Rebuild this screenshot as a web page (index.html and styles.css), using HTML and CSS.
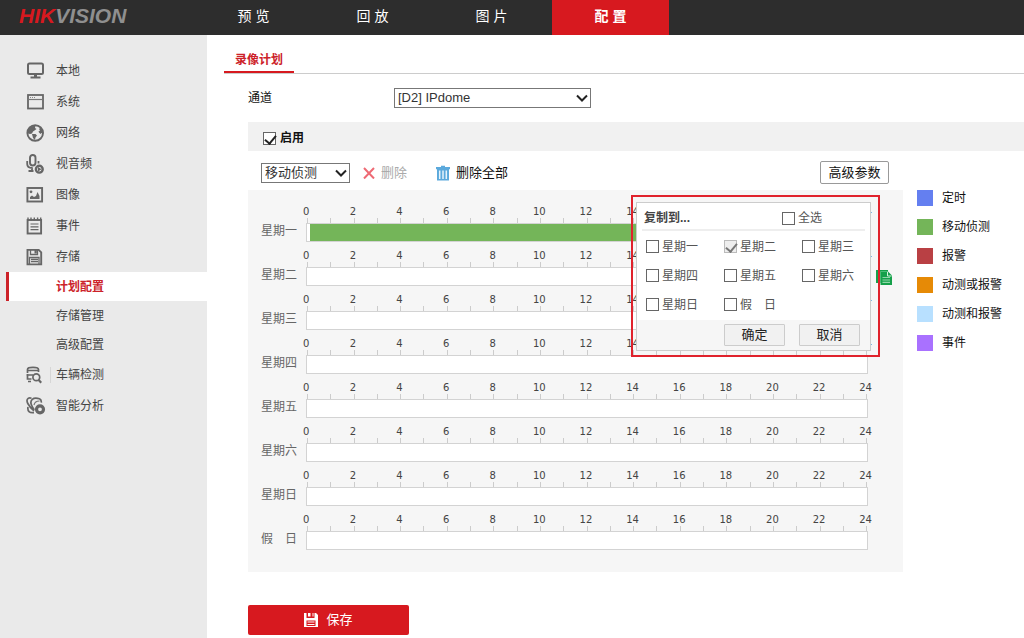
FILE: index.html
```html
<!DOCTYPE html>
<html lang="zh-CN">
<head>
<meta charset="utf-8">
<title>录像计划</title>
<link rel="stylesheet" href="styles.css">
</head>
<body>
<header class="topbar">
  <div class="logo"><span class="logo-red">HIK</span>VISION</div>
  <nav class="topnav">
    <a href="#">预 览</a>
    <a href="#">回 放</a>
    <a href="#">图 片</a>
    <a href="#" class="active">配 置</a>
  </nav>
</header>
<div class="layout">
  <nav class="sidebar">
    <a href="#" class="item"><svg class="icon" viewBox="0 0 18 18"><rect x="2" y="1.500" width="15" height="10.500" rx="1.500" fill="none" stroke="#666" stroke-width="2"/><path d="M8 12h3v2.500h3.500V16.500h-10v-2H8z" fill="#666"/></svg>本地</a>
    <a href="#" class="item"><svg class="icon" viewBox="0 0 18 18"><rect x="2" y="2" width="15" height="13.500" fill="none" stroke="#666" stroke-width="1.800"/><path d="M2 6.500h15" stroke="#777" stroke-width="1.200"/><path d="M4 4.500h5" stroke="#888" stroke-dasharray="1 1"/></svg>系统</a>
    <a href="#" class="item"><svg class="icon" viewBox="0 0 18 18"><circle cx="9.200" cy="9" r="7.800" fill="none" stroke="#666" stroke-width="1.900"/><path d="M2 9.500V6L5 2.500l4.500-1L9 4l1.500 1L8.500 6.500 7 7.500 6 9.500 4 10zM6 10h3.500L11 11.500 9.500 13.500 9 16 7 14zM13 8.500l-.5-1L14 6.500 13 5l1.500-1.500L17 7l.5 2.500-2-.5-1 1z" fill="#666"/></svg>网络</a>
    <a href="#" class="item"><svg class="icon tall" viewBox="0 0 18 20"><rect x="4" y="1" width="5.500" height="10.500" rx="2.700" fill="none" stroke="#666" stroke-width="1.900"/><path d="M1.200 7v3c0 2.500 2 4 5.300 4M6 13.500v3M2.500 17h5M12.500 7v2.500" fill="none" stroke="#666" stroke-width="1.800"/><circle cx="13.300" cy="15.200" r="3.400" fill="none" stroke="#666" stroke-width="2.400"/><path d="M12 13l3.500 2.200-3.500 2.200z" fill="#666"/></svg>视音频</a>
    <a href="#" class="item"><svg class="icon" viewBox="0 0 18 18"><rect x="1.400" y="2" width="14.700" height="13.500" fill="none" stroke="#666" stroke-width="1.900"/><path d="M4 13v-2l2-1.500L8 11l2-1 1.500-4L13.500 10v3z" fill="#666"/><circle cx="5" cy="5.800" r="1.400" fill="#666"/></svg>图像</a>
    <a href="#" class="item"><svg class="icon" viewBox="0 0 18 18"><rect x="1.600" y="3" width="13.500" height="13.500" fill="none" stroke="#666" stroke-width="1.900"/><path d="M2 .5v3M5 .5v3M8.300.5v3M11.600.5v3M14.700.5v3" stroke="#666" stroke-width="1.400"/><path d="M4.500 7h8M4.500 9.800h8M4.500 12.600h8" stroke="#666" stroke-width="1.200"/></svg>事件</a>
    <a href="#" class="item"><svg class="icon" viewBox="0 0 18 18"><path d="M1.500 1.900h11.200l2.500 2.500v12H1.500z" fill="none" stroke="#666" stroke-width="1.900"/><path d="M4.500 2v4.500h7V2M3.500 16V9.500h9.500V16M5 11.500h7M5 13.700h7" fill="none" stroke="#666" stroke-width="1.300"/><path d="M8.500 2h2.300v3.500H8.500z" fill="#666"/></svg>存储</a>
    <a href="#" class="sub active">计划配置</a>
    <a href="#" class="sub">存储管理</a>
    <a href="#" class="sub">高级配置</a>
    <a href="#" class="item ruled"><svg class="icon" viewBox="0 0 18 18"><path d="M1.500 7V3.500C1.500 2 3 1.300 7 1.300S12.500 2 12.500 3.500V6M1.500 4.500h11M.5 9h6.500M1.500 8v5h4M2 15.500h3" fill="none" stroke="#666" stroke-width="1.700"/><circle cx="10.300" cy="11.300" r="3.400" fill="none" stroke="#666" stroke-width="1.700"/><path d="M12.500 13.800l2.700 2.900" stroke="#666" stroke-width="2.200"/></svg>车辆检测</a>
    <a href="#" class="item"><svg class="icon wide" viewBox="0 0 20 18"><path d="M13.500 1.800C7-.5 3.500 3.500 5.500 8c.8 2 1.600 3.500 2.800 4.800M5.500 1.200C1.500 0 0 3 1.800 6.500c1.500 3 3.500 5 6.200 7.300M13.500 1.800c1.500.8 2 2 1.800 3.800M2 10c-.8 4 1.500 6.200 6 5.600" fill="none" stroke="#666" stroke-width="1.700"/><path d="M8 8a5.500 5 0 0 1 5.500-4" fill="none" stroke="#777" stroke-width="1.200"/><circle cx="14" cy="12.300" r="3.500" fill="none" stroke="#666" stroke-width="3.200"/></svg>智能分析</a>
  </nav>
  <main class="main">
    <div class="tabs"><a href="#" class="tab">录像计划</a></div>
    <div class="content">
      <div class="channel">
        <label for="channel">通道</label>
        <span class="select channel-select">
          <select id="channel"><option>[D2] IPdome</option></select>
          <svg class="chevron" viewBox="0 0 12 8"><path d="M1 1.500l5 5 5-5" fill="none" stroke="#222" stroke-width="2"/></svg>
        </span>
      </div>
      <div class="enable"><label class="check"><input type="checkbox" checked>启用</label></div>
      <div class="toolbar">
        <span class="select type-select">
          <select aria-label="录像类型"><option>移动侦测</option></select>
          <svg class="chevron" viewBox="0 0 12 8"><path d="M1 1.500l5 5 5-5" fill="none" stroke="#222" stroke-width="2"/></svg>
        </span>
        <button class="tool delete" disabled><svg class="cross" viewBox="0 0 12 12"><path d="M1 1l10 10.500M11 1L1 11.500" stroke="#ee6a74" stroke-width="2"/></svg>删除</button>
        <button class="tool"><svg class="trash" viewBox="0 0 14 16"><path d="M0 2h5V.8h4V2h5v2.200H0z" fill="#5ba9dc"/><path d="M1 4h12v11.500H1z" fill="#5ba9dc"/><path d="M3.700 5.500V14M7 5.500V14M10.300 5.500V14" stroke="#e6f3fc" stroke-width="1.500"/></svg>删除全部</button>
        <button class="advanced">高级参数</button>
      </div>
      <div class="schedule">
        <section class="panel">
          <div id="days" class="days"></div>
          <div class="highlight">
            <form class="popup">
              <div class="popup-head"><strong>复制到...</strong><label class="check"><input type="checkbox">全选</label></div>
              <div class="popup-days">
                <label class="check"><input type="checkbox">星期一</label>
                <label class="check"><input type="checkbox" checked disabled>星期二</label>
                <label class="check"><input type="checkbox">星期三</label>
                <label class="check"><input type="checkbox">星期四</label>
                <label class="check"><input type="checkbox">星期五</label>
                <label class="check"><input type="checkbox">星期六</label>
                <label class="check"><input type="checkbox">星期日</label>
                <label class="check"><input type="checkbox">假　日</label>
              </div>
              <div class="popup-foot"><button type="button">确定</button><button type="button">取消</button></div>
            </form>
          </div>
        </section>
        <ul class="legend">
          <li><i class="swatch timed"></i>定时</li>
          <li><i class="swatch motion"></i>移动侦测</li>
          <li><i class="swatch alarm"></i>报警</li>
          <li><i class="swatch either"></i>动测或报警</li>
          <li><i class="swatch both"></i>动测和报警</li>
          <li><i class="swatch event"></i>事件</li>
        </ul>
      </div>
      <button class="save"><svg class="disk" viewBox="0 0 14 14"><path d="M0 0h2.500v5h8V0H12l2 2v12H0zM4 0h2.500v3.500H4zM8.500 0H9.500v3.500H8.500z" fill="#fff"/><path d="M2.500 7.500h9V13h-9z" fill="#d7191f"/><path d="M3.500 9h7M3.500 11.500h7" stroke="#fff"/></svg>保存</button>
    </div>
  </main>
</div>
<script src="schedule.js"></script>
</body>
</html>
```
FILE: styles.css
```css
* { box-sizing: border-box; }
body {
  margin: 0;
  min-height: 100vh;
  display: flex;
  flex-direction: column;
  background: #fff;
  color: #111;
  font: 12px/16px "Liberation Sans", "Noto Sans CJK SC", sans-serif;
}
a { color: inherit; text-decoration: none; }
button, select, input { font: inherit; color: inherit; margin: 0; }
button { cursor: pointer; }

.topbar { display: flex; height: 35px; background: #2d2d2d; }
.logo {
  width: 195px;
  padding-left: 19px;
  color: #8f8f8f;
  font-size: 21px;
  font-weight: bold;
  font-style: italic;
  line-height: 31px;
}
.logo-red { color: #d7191f; }
.topnav { display: flex; gap: 2px; }
.topnav a {
  width: 117px;
  color: #fff;
  font-size: 14px;
  line-height: 33px;
  text-align: center;
}
.topnav .active { background: #d7191f; font-weight: bold; }

.layout { flex: 1; display: flex; }
.sidebar { width: 207px; padding-top: 20px; background: #eaeaea; color: #444; }
.item { display: flex; align-items: center; gap: 12px; height: 31px; padding: 1px 0 0 26px; }
.icon { width: 18px; height: 18px; }
.icon.tall { height: 20px; }
.icon.wide { width: 20px; margin-right: -2px; }
.ruled { position: relative; }
.ruled::after { content: ""; position: absolute; left: 50px; top: 8px; width: 1px; height: 16px; background: #d6d6d6; }
.sub { display: block; padding: 2px 0 0 56px; line-height: 27px; }
.sub.active {
  margin-left: 6px;
  padding-left: 47px;
  border-left: 3px solid #cc2229;
  background: #fff;
  color: #cc2229;
  font-weight: bold;
}

.main { flex: 1; min-width: 0; }
.tabs { display: flex; height: 39px; margin-left: 17px; border-bottom: 1px solid #ccc; }
.tab {
  width: 70px;
  border-bottom: 2px solid #d7191f;
  color: #cc2229;
  font-weight: bold;
  line-height: 50px;
  text-align: center;
}
.content { margin-left: 41px; }
.channel { display: flex; align-items: center; height: 48px; }
.channel label { width: 146px; }
.select { position: relative; display: block; height: 20px; }
.channel-select { width: 197px; }
.type-select { width: 89px; }
.select select {
  appearance: none;
  width: 100%;
  height: 100%;
  padding: 0 3px;
  border: 1px solid #777;
  border-radius: 0;
  background: #fff;
  color: #333;
  font-size: 13px;
  line-height: 18px;
}
.chevron { position: absolute; right: 3px; top: 6px; width: 12px; height: 8px; pointer-events: none; }

.check { display: flex; align-items: center; gap: 3px; }
.check input {
  appearance: none;
  position: relative;
  flex: none;
  width: 13px;
  height: 13px;
  border: 1px solid #666;
  background: #fff;
}
.check input:checked::after {
  content: "";
  position: absolute;
  left: 3px;
  top: 0;
  width: 5px;
  height: 9px;
  border: solid #222;
  border-width: 0 2px 2px 0;
  transform: rotate(40deg);
}
.check input:disabled { border-color: #bbb; background: #eee; }
.check input:disabled::after { border-color: #777; }

.enable { padding: 8px 15px 5px; height: 29px; background: #f1f1f1; font-weight: bold; }
.enable .check { gap: 4px; width: max-content; }

.toolbar { display: flex; align-items: center; height: 39px; padding: 4px 13px 0; font-size: 13px; }
.toolbar .tool {
  display: flex;
  align-items: center;
  gap: 6px;
  margin-left: 13px;
  padding: 0;
  border: 0;
  background: none;
}
.toolbar .delete { color: #aaa; margin-right: 16px; }
.cross { width: 12px; height: 12px; }
.trash { width: 14px; height: 16px; }
.advanced {
  height: 23px;
  width: 69px;
  margin-left: auto;
  margin-right: 122px;
  padding: 0;
  border: 1px solid #999;
  border-radius: 2px;
  background: #fff;
}

.schedule { display: flex; gap: 14px; }
.panel { position: relative; flex: 1; padding: 16px 35px 22px 13px; background: #f6f6f6; }
.days { display: flex; flex-direction: column; gap: 8px; }
.day { position: relative; display: flex; align-items: flex-end; gap: 9px; color: #666; }
.day-name { width: 36px; line-height: 22px; }
.timeline { flex: 1; }
.hours {
  display: flex;
  margin: 0 -21px 0 -23px;
  color: #444;
  font-family: "DejaVu Sans", sans-serif;
  font-size: 10px;
  line-height: 12px;
}
.hours span { flex: 1; text-align: center; }
.ticks { display: flex; height: 5px; margin: 0 1px; border-right: 1px solid #ccc; }
.ticks i { flex: 1; border-left: 1px solid #ccc; }
.track { height: 19px; padding-left: 3px; border: 1px solid #d3d3d3; background: #fff; }
.fill { height: 100%; background: #74b559; }
.copy { position: absolute; right: -24px; bottom: 1px; width: 16px; height: 16px; padding: 0; border: 0; background: none; }
.copy svg { display: block; }

.highlight {
  position: absolute;
  top: 5px;
  right: 23px;
  width: 249px;
  padding: 5px 7px 4px 3px;
  border: 2px solid #e0222c;
}
.popup { border: 1px solid #ccc; background: #fff; color: #555; }
.popup-head {
  display: flex;
  align-items: center;
  justify-content: space-between;
  height: 28px;
  margin: 0 5px;
  padding: 4px 43px 0 2px;
  border-bottom: 2px solid #eee;
}
.popup-head strong { color: #444; }
.popup-days { display: grid; grid-template-columns: repeat(3, 78px); grid-auto-rows: 29px; padding: 1px 0 1px 9px; overflow: hidden; }
.popup-foot { display: flex; justify-content: flex-end; gap: 14px; padding: 4px 10px; background: #f6f6f6; }
.popup-foot button {
  width: 61px;
  height: 22px;
  padding: 0;
  border: 1px solid #ccc;
  border-radius: 1px;
  background: #f1f1f1;
  color: #222;
  font-size: 13px;
}

.legend { width: 107px; margin: 0; padding: 0; list-style: none; display: flex; flex-direction: column; gap: 13px; }
.legend li { display: flex; align-items: center; gap: 9px; }
.swatch { width: 16px; height: 16px; }
.timed { background: #647ff0; }
.motion { background: #74b559; }
.alarm { background: #b94044; }
.either { background: #e68a06; }
.both { background: #b8e0ff; }
.event { background: #a971ff; }

.save {
  display: flex;
  align-items: center;
  justify-content: center;
  gap: 8px;
  width: 161px;
  height: 30px;
  margin-top: 33px;
  padding: 0;
  border: 0;
  border-radius: 2px;
  background: #d7191f;
  color: #fff;
  font-size: 13px;
}
.disk { width: 14px; height: 14px; }
```
FILE: schedule.js
```js
const days = [
  { name: "星期一", filled: true },
  { name: "星期二", copy: true },
  { name: "星期三" },
  { name: "星期四" },
  { name: "星期五" },
  { name: "星期六" },
  { name: "星期日" },
  { name: "假　日" }
];

const hours = Array.from({ length: 13 }, (_, i) => `<span>${i * 2}</span>`).join("");
const ticks = "<i></i>".repeat(24);
const copyButton = `<button class="copy" aria-label="复制到"><svg width="16" height="16" viewBox="0 0 16 16"><path d="M0 1h12v13H0z" fill="#15a04a"/><path d="M4.500 2.500H12L16 6.500V16H4.500z" fill="#15a04a"/><path d="M4.500 14V2.500H12" fill="none" stroke="#5cc282" stroke-width=".8"/><path d="M12 1.500L16 5.500V1H12z" fill="#f6f6f6"/><path d="M11.500 3v4H15.500" fill="none" stroke="#d6f2de"/><path d="M6.500 8.500h7.500M6.500 11h7.500M6.500 13.300h7.500" fill="none" stroke="#8fd6a8" stroke-width="1.200"/></svg></button>`;

document.getElementById("days").innerHTML = days.map(day => `
  <div class="day">
    <span class="day-name">${day.name}</span>
    <div class="timeline">
      <div class="hours">${hours}</div>
      <div class="ticks">${ticks}</div>
      <div class="track">${day.filled ? '<div class="fill"></div>' : ""}</div>
    </div>
    ${day.copy ? copyButton : ""}
  </div>`).join("");
```
